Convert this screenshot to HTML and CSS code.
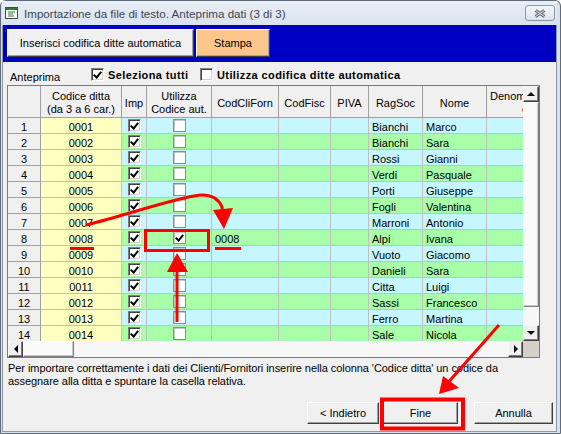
FILE: index.html
```html
<!DOCTYPE html>
<html lang="it">
<head>
    <meta charset="UTF-8">
    <title>Importazione da file di testo</title>
    <link rel="stylesheet" href="styles.css">
</head>
<body>
    <div class="window">
        <div class="titlebar">
            <svg class="app-icon" width="13" height="12" viewBox="0 0 13 12">
                <rect x="0.5" y="0.5" width="12" height="11" fill="#fff" stroke="#4a4a4a"/>
                <rect x="1" y="1" width="11" height="2" fill="#2f7d32"/>
                <path d="M3 5h7M3 7h5M3 9h6" stroke="#2f7d32" stroke-width="1"/>
            </svg>
            <span class="title">Importazione da file di testo. Anteprima dati (3 di 3)</span>
            <div class="close-btn">
                <svg width="12" height="9" viewBox="0 0 12 9">
                    <path d="M1.5 1.5l9 6M10.5 1.5l-9 6" stroke="#5a6370" stroke-width="3"/>
                    <path d="M1.5 1.5l9 6M10.5 1.5l-9 6" stroke="#f4f6f8" stroke-width="1"/>
                </svg>
            </div>
        </div>

        <div class="client">
            <div class="toolbar">
                <div class="tb-btn">Inserisci codifica ditte automatica</div>
                <div class="tb-btn print">Stampa</div>
            </div>

            <div class="options">
                <span class="opt-label">Anteprima</span>
                <label class="check first"><span class="cb on"></span><b>Seleziona tutti</b></label>
                <label class="check"><span class="cb"></span><b>Utilizza codifica ditte automatica</b></label>
            </div>

            <div class="grid">
                <div class="viewport">
                    <div class="head">
                        <div></div>
                        <div>Codice ditta<br>(da 3 a 6 car.)</div>
                        <div>Imp</div>
                        <div>Utilizza<br>Codice aut.</div>
                        <div>CodCliForn</div>
                        <div>CodFisc</div>
                        <div>PIVA</div>
                        <div>RagSoc</div>
                        <div>Nome</div>
                        <div class="clip">Denominazion<br>e</div>
                    </div>
                    <div class="row odd"><div class="num">1</div><div class="code">0001</div><div class="box"><span class="cb on"></span></div><div class="box"><span class="cb flat"></span></div><div></div><div></div><div></div><div class="txt">Bianchi</div><div class="txt">Marco</div><div></div></div>
                    <div class="row even"><div class="num">2</div><div class="code">0002</div><div class="box"><span class="cb on"></span></div><div class="box"><span class="cb flat"></span></div><div></div><div></div><div></div><div class="txt">Bianchi</div><div class="txt">Sara</div><div></div></div>
                    <div class="row odd"><div class="num">3</div><div class="code">0003</div><div class="box"><span class="cb on"></span></div><div class="box"><span class="cb flat"></span></div><div></div><div></div><div></div><div class="txt">Rossi</div><div class="txt">Gianni</div><div></div></div>
                    <div class="row even"><div class="num">4</div><div class="code">0004</div><div class="box"><span class="cb on"></span></div><div class="box"><span class="cb flat"></span></div><div></div><div></div><div></div><div class="txt">Verdi</div><div class="txt">Pasquale</div><div></div></div>
                    <div class="row odd"><div class="num">5</div><div class="code">0005</div><div class="box"><span class="cb on"></span></div><div class="box"><span class="cb flat"></span></div><div></div><div></div><div></div><div class="txt">Porti</div><div class="txt">Giuseppe</div><div></div></div>
                    <div class="row even"><div class="num">6</div><div class="code">0006</div><div class="box"><span class="cb on"></span></div><div class="box"><span class="cb flat"></span></div><div></div><div></div><div></div><div class="txt">Fogli</div><div class="txt">Valentina</div><div></div></div>
                    <div class="row odd"><div class="num">7</div><div class="code">0007</div><div class="box"><span class="cb on"></span></div><div class="box"><span class="cb flat"></span></div><div></div><div></div><div></div><div class="txt">Marroni</div><div class="txt">Antonio</div><div></div></div>
                    <div class="row even"><div class="num">8</div><div class="code">0008</div><div class="box"><span class="cb on"></span></div><div class="box"><span class="cb flat on"></span></div><div class="txt">0008</div><div></div><div></div><div class="txt">Alpi</div><div class="txt">Ivana</div><div></div></div>
                    <div class="row odd"><div class="num">9</div><div class="code">0009</div><div class="box"><span class="cb on"></span></div><div class="box"><span class="cb flat"></span></div><div></div><div></div><div></div><div class="txt">Vuoto</div><div class="txt">Giacomo</div><div></div></div>
                    <div class="row even"><div class="num">10</div><div class="code">0010</div><div class="box"><span class="cb on"></span></div><div class="box"><span class="cb flat"></span></div><div></div><div></div><div></div><div class="txt">Danieli</div><div class="txt">Sara</div><div></div></div>
                    <div class="row odd"><div class="num">11</div><div class="code">0011</div><div class="box"><span class="cb on"></span></div><div class="box"><span class="cb flat"></span></div><div></div><div></div><div></div><div class="txt">Citta</div><div class="txt">Luigi</div><div></div></div>
                    <div class="row even"><div class="num">12</div><div class="code">0012</div><div class="box"><span class="cb on"></span></div><div class="box"><span class="cb flat"></span></div><div></div><div></div><div></div><div class="txt">Sassi</div><div class="txt">Francesco</div><div></div></div>
                    <div class="row odd"><div class="num">13</div><div class="code">0013</div><div class="box"><span class="cb on"></span></div><div class="box"><span class="cb flat"></span></div><div></div><div></div><div></div><div class="txt">Ferro</div><div class="txt">Martina</div><div></div></div>
                    <div class="row even"><div class="num">14</div><div class="code">0014</div><div class="box"><span class="cb on"></span></div><div class="box"><span class="cb flat"></span></div><div></div><div></div><div></div><div class="txt">Sale</div><div class="txt">Nicola</div><div></div></div>
                </div>

                <div class="vscroll">
                    <div class="sb-btn"><span class="arrow up"></span></div>
                    <div class="sb-thumb v"></div>
                    <div class="sb-track"></div>
                    <div class="sb-btn"><span class="arrow down"></span></div>
                </div>
                <div class="hscroll">
                    <div class="sb-btn"><span class="arrow left"></span></div>
                    <div class="sb-thumb h"></div>
                    <div class="sb-track"></div>
                    <div class="sb-btn"><span class="arrow right"></span></div>
                </div>
                <div class="corner"></div>
            </div>

            <p class="note">
                Per importare correttamente i dati dei Clienti/Fornitori inserire nella colonna 'Codice ditta' un codice da<br>
                assegnare alla ditta e spuntare la casella relativa.
            </p>

            <div class="actions">
                <div class="btn back">&lt; Indietro</div>
                <div class="btn finish">Fine</div>
                <div class="btn cancel">Annulla</div>
            </div>
        </div>

        <!-- segni rossi sopra lo screenshot -->
        <svg class="marks" width="561" height="434" viewBox="0 0 561 434">
            <g fill="none" stroke="#f00" stroke-width="3">
                <path d="M85 224 C125 214 165 200 193 195 C207 192 217 196 221 206 L222 214"/>
                <rect x="144.5" y="229.5" width="63" height="20"/>
                <path d="M176 321 V264"/>
                <path d="M498 324 L444 385"/>
                <rect x="381" y="398.5" width="81" height="29" stroke-width="4"/>
            </g>
            <g fill="#f00">
                <polygon points="212,209 232,207 223,228"/>
                <polygon points="166,271 187,271 176,252"/>
                <polygon points="442,375 458,387 438,393"/>
                <rect x="69" y="246" width="24" height="3"/>
                <rect x="214" y="246" width="26" height="3"/>
            </g>
        </svg>
    </div>
</body>
</html>
```

FILE: styles.css
```css
* {
    margin: 0;
    padding: 0;
    box-sizing: border-box;
}

body {
    font-family: "Liberation Sans", Arial, sans-serif;
    font-size: 11px;
    color: #000;
    background: #fff;
}

.window {
    position: relative;
    width: 561px;
    height: 434px;
    border: 1px solid #5f6b79;
    border-radius: 6px 6px 0 0;
    padding: 0 3px 1px 1px;
    background: #d7e1ec;
    display: flex;
    flex-direction: column;
}

/* barra del titolo */
.titlebar {
    height: 24px;
    display: flex;
    align-items: center;
    background: linear-gradient(#e8eef5, #d9e3ee);
}

.app-icon {
    margin-left: 3px;
    margin-right: 6px;
}

.title {
    font-size: 11.6px;
    color: #3f4550;
}

.close-btn {
    margin-left: auto;
    margin-right: 2px;
    width: 30px;
    height: 16px;
    border: 1px solid #8a96a4;
    border-radius: 3px;
    background: linear-gradient(#f5f7f9, #dde3ea);
    display: flex;
    align-items: center;
    justify-content: center;
}

.client {
    flex: 1;
    background: #f0f0f0;
    border-left: 1px solid #8d99a6;
    border-right: 1px solid #8d99a6;
    border-bottom: 1px solid #8d99a6;
    display: flex;
    flex-direction: column;
}

/* barra blu */
.toolbar {
    height: 37px;
    background: #0000c4;
    display: flex;
    padding: 4px 0 0 4px;
    gap: 2px;
}

.tb-btn {
    height: 28px;
    width: 187px;
    background: #f0f0f0;
    border: 1px solid;
    border-color: #fff #404040 #404040 #fff;
    box-shadow: inset -1px -1px #a0a0a0;
    display: flex;
    align-items: center;
    justify-content: center;
}

.tb-btn.print {
    width: 74px;
    background: #ffc68c;
}

/* opzioni */
.options {
    height: 23px;
    display: flex;
    align-items: center;
    padding-top: 2px;
}

.opt-label {
    width: 88px;
    padding-left: 7px;
    padding-top: 4px;
}

.check {
    display: flex;
    align-items: center;
    gap: 4px;
}

.check.first {
    width: 109px;
}

.check b {
    letter-spacing: 0.4px;
}

.cb {
    width: 13px;
    height: 13px;
    background: #fff;
    border: 1px solid;
    border-color: #808080 #fff #fff #808080;
    box-shadow: inset 1px 1px #404040, inset -1px -1px #d4d0c8;
    display: flex;
    align-items: center;
    justify-content: center;
}

.cb.flat {
    border-color: #8a8a8a;
    box-shadow: inset 1px 1px #c8c8c8;
}

.cb.on::after {
    content: "";
    width: 3px;
    height: 6px;
    margin-top: -2px;
    border: solid #000;
    border-width: 0 2px 2px 0;
    transform: rotate(40deg);
}

/* griglia */
.grid {
    margin-left: 4px;
    width: 533px;
    height: 273px;
    border: 1px solid #7a7a7a;
    background: #fff;
    display: grid;
    grid-template-columns: 515px 16px;
    grid-template-rows: 255px 16px;
}

.viewport {
    overflow: hidden;
}

.head,
.row {
    display: grid;
    grid-template-columns: 33px 81px 25px 65px 67px 52px 38px 54px 64px 66px;
    width: max-content;
}

.head {
    height: 32px;
}

.head > div {
    background: #f0f0f0;
    border-right: 1px solid #a0a0a0;
    border-bottom: 1px solid #a0a0a0;
    display: flex;
    align-items: center;
    justify-content: center;
    text-align: center;
    line-height: 13px;
    padding-top: 3px;
}

.head > .clip {
    white-space: nowrap;
    justify-content: flex-start;
    padding-left: 3px;
}

.row {
    height: 16px;
}

.row > div {
    border-right: 1px solid #c0c0c0;
    border-bottom: 1px solid #c0c0c0;
    line-height: 14px;
    padding-top: 2px;
    white-space: nowrap;
    overflow: hidden;
}

.odd > div { background: #c6f6ff; }
.even > div { background: #a8ffa8; }

.row > .num {
    background: #f0f0f0;
    border-color: #a0a0a0;
    text-align: center;
}

.row > .code {
    background: #ffffc0;
    text-align: center;
}

.row > .box {
    padding-top: 0;
    display: flex;
    align-items: center;
    justify-content: center;
}

.row > .txt {
    padding-left: 3px;
}

/* barre di scorrimento */
.vscroll {
    display: grid;
    grid-template-rows: 16px 205px 18px 16px;
}

.hscroll {
    display: grid;
    grid-template-columns: 15px 51px 434px 15px;
}

.sb-btn {
    background: #f0f0f0;
    border: 1px solid;
    border-color: #f8f8f8 #404040 #404040 #f8f8f8;
    box-shadow: inset -1px -1px #808080;
    display: flex;
    align-items: center;
    justify-content: center;
}

.sb-thumb {
    background: #fafafa;
    border: 1px solid;
    border-color: #fff #808080 #808080 #fff;
    box-shadow: inset -1px -1px #c8c8c8;
}

.sb-track {
    background: #f7f7f7;
}

.corner {
    background: #d4d0c8;
}

.arrow {
    width: 0;
    height: 0;
    border: 4px solid transparent;
}

.arrow.up { border-bottom-color: #000; border-top-width: 0; }
.arrow.down { border-top-color: #000; border-bottom-width: 0; }
.arrow.left { border-right-color: #000; border-left-width: 0; }
.arrow.right { border-left-color: #000; border-right-width: 0; }

/* testo e pulsanti */
.note {
    margin-top: 4px;
    padding-left: 5px;
    line-height: 13px;
    letter-spacing: -0.06px;
}

.actions {
    margin-top: 14px;
    display: flex;
    justify-content: flex-end;
    padding-right: 3px;
}

.btn {
    height: 22px;
    background: #f0f0f0;
    border: 1px solid;
    border-color: #fff #404040 #404040 #fff;
    box-shadow: inset -1px -1px #a0a0a0;
    display: flex;
    align-items: center;
    justify-content: center;
}

.btn.back { width: 72px; }
.btn.finish { width: 75px; margin-left: 4px; }
.btn.cancel { width: 79px; margin-left: 16px; }

.marks {
    position: absolute;
    left: 0;
    top: 0;
    pointer-events: none;
}
```
